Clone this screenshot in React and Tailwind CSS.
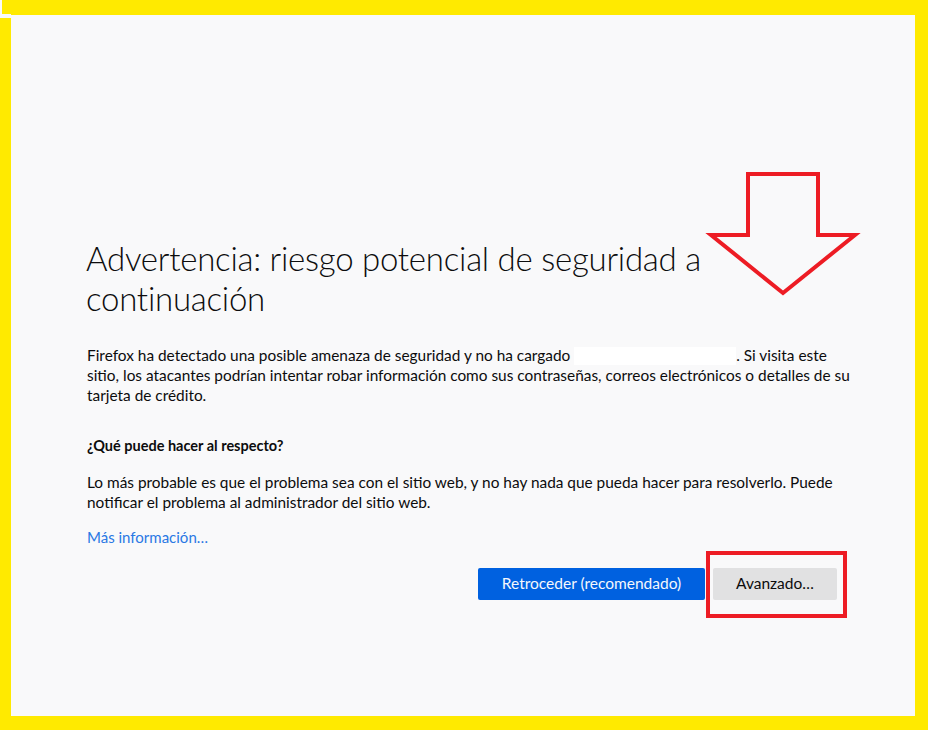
import React from 'react'

const font = { fontFamily: 'Lato, "Liberation Sans", sans-serif' }

export default function App() {
  return (
    <div className="relative w-[928px] h-[730px] bg-[#ffea00] pt-[15px] pl-[11px] pr-[13px] pb-[14px] overflow-hidden" style={font}>
      {/* small gaps in the highlight frame, top left */}
      <div className="absolute left-0 top-0 w-[2px] h-[14px] bg-[#f9f9fa]" />
      <div className="absolute left-0 top-[14px] w-[11px] h-[4px] bg-[#f9f9fa]" />

      <div className="h-full bg-[#f9f9fa] text-[#0c0c0d] pl-[76px] pt-[223px]">
        <div className="w-[770px]">
          <h1 className="-ml-px w-[760px] text-[33px] leading-[40px] font-light tracking-[-0.25px]">
            Advertencia: riesgo potencial de seguridad a continuación
          </h1>

          <p className="mt-[27px] text-[15.4px] leading-[20px]">
            Firefox ha detectado una posible amenaza de seguridad y no ha cargado{' '}
            <span className="inline-block w-[162px] h-[18px] bg-white align-[-4px]"></span>. Si visita este
            sitio, los atacantes podrían intentar robar información como sus contraseñas, correos electrónicos o detalles de su tarjeta de crédito.
          </p>

          <h2 className="mt-[31px] text-[14.5px] leading-[20px] font-bold">¿Qué puede hacer al respecto?</h2>

          <p className="mt-[16px] text-[15.4px] leading-[20px]">
            Lo más probable es que el problema sea con el sitio web, y no hay nada que pueda hacer para resolverlo. Puede notificar el problema al administrador del sitio web.
          </p>

          <p className="mt-[15px] text-[15px] leading-[20px]">
            <a href="#" className="text-[#2a78e4]">Más información…</a>
          </p>

          <div className="mt-[21px] flex justify-end gap-[8px] pr-[20px]">
            <button type="button" className="w-[227px] h-[32px] rounded-[2px] bg-[#0061e0] text-[#f4f7fc] text-[15.5px]">
              Retroceder (recomendado)
            </button>
            <button type="button" className="w-[124px] h-[32px] rounded-[2px] bg-[#e1e1e2] text-[#0c0c0d] text-[15.5px]">
              Avanzado…
            </button>
          </div>
        </div>
      </div>

      {/* red annotation: box around the Avanzado button */}
      <div className="absolute left-[706px] top-[551px] w-[141px] h-[67px] border-[4px] border-[#ed1c24]" />

      {/* red annotation: arrow pointing down */}
      <svg className="absolute left-0 top-0" width="928" height="730" viewBox="0 0 928 730" fill="none">
        <polygon
          points="748,174 818,174 818,235 855,235 783,293 711,235 748,235"
          stroke="#ed1c24"
          strokeWidth="4"
          strokeLinejoin="miter"
        />
      </svg>
    </div>
  )
}
